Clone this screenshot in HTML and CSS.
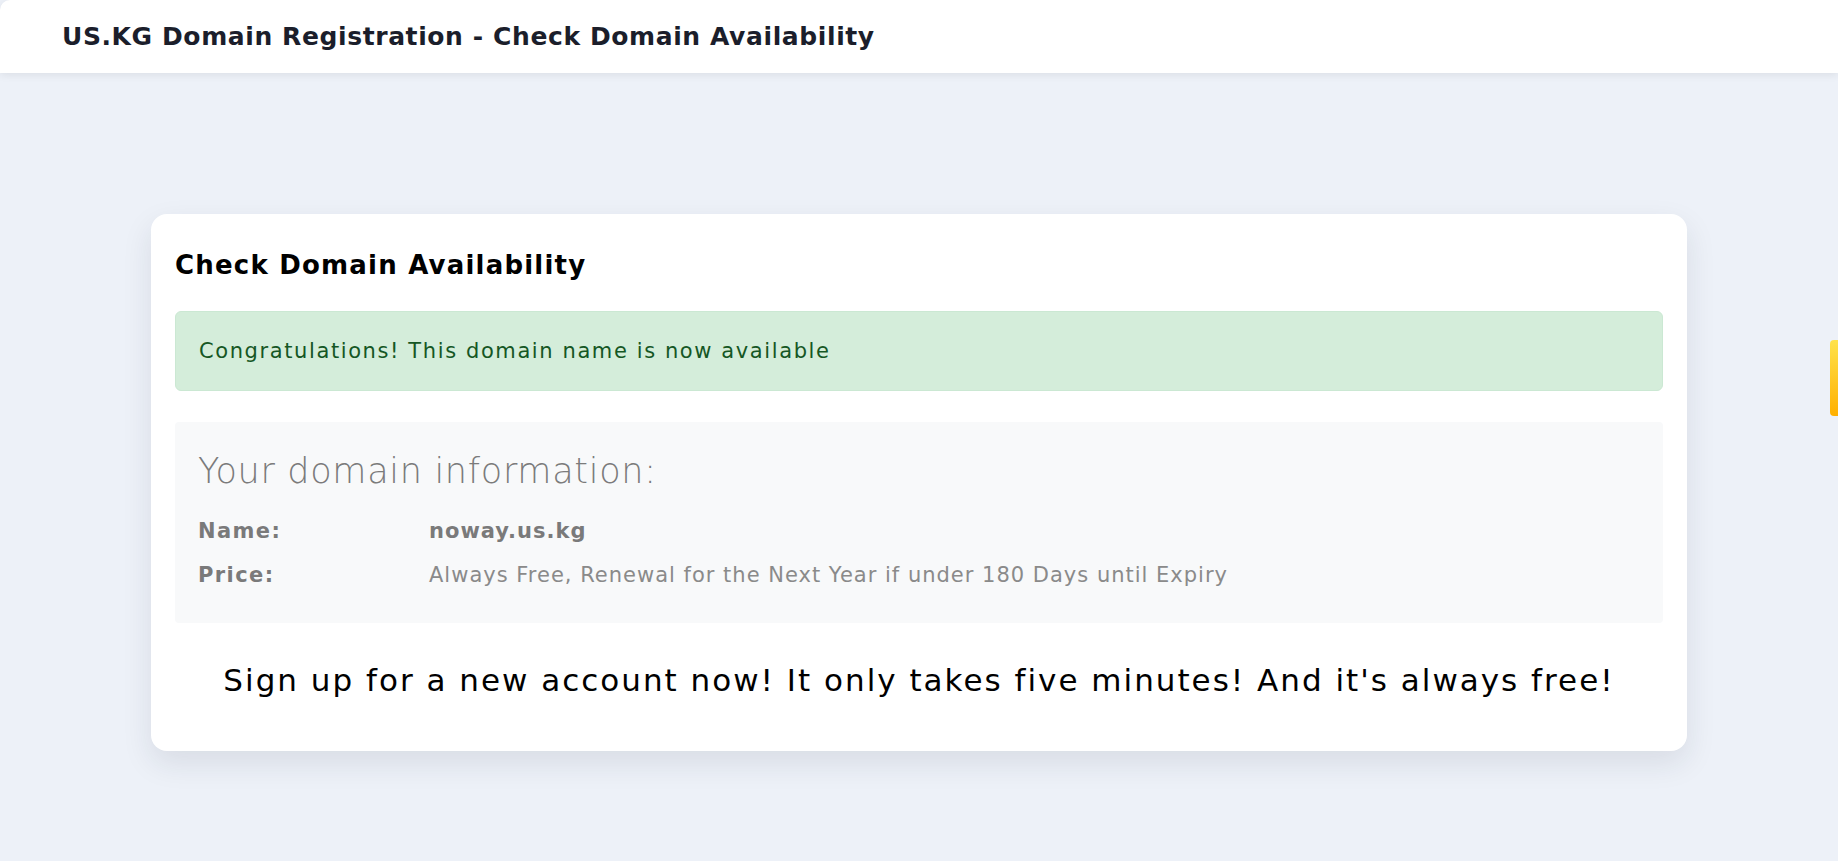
FILE: index.html
```html
<!DOCTYPE html>
<html lang="en">
<head>
<meta charset="utf-8">
<title>US.KG Domain Registration - Check Domain Availability</title>
<link rel="stylesheet" href="styles.css">
</head>
<body>
<header class="topbar">
  <h1 class="topbar-title">US.KG Domain Registration - Check Domain Availability</h1>
</header>
<main class="page">
  <section class="card">
    <h2 class="card-title">Check Domain Availability</h2>
    <div class="alert-success">Congratulations! This domain name is now available</div>
    <div class="info-box">
      <h3 class="info-heading">Your domain information:</h3>
      <div class="info-row">
        <span class="info-label">Name:</span>
        <span class="info-value info-value-strong">noway.us.kg</span>
      </div>
      <div class="info-row">
        <span class="info-label">Price:</span>
        <span class="info-value">Always Free, Renewal for the Next Year if under 180 Days until Expiry</span>
      </div>
    </div>
    <p class="signup">Sign up for a new account now! It only takes five minutes! And it's always free!</p>
  </section>
</main>
<div class="side-tab"></div>
</body>
</html>
```
FILE: styles.css
```css
html, body {
  margin: 0;
  padding: 0;
}
body {
  background: #edf1f8;
  font-family: "DejaVu Sans", "Open Sans", sans-serif;
  color: #212529;
  min-height: 861px;
  overflow: hidden;
}
.topbar {
  height: 73px;
  background: #ffffff;
  box-shadow: 0 2px 8px rgba(0, 0, 0, 0.08);
  border-top-left-radius: 10px;
  display: flex;
  align-items: center;
  padding-left: 62px;
  box-sizing: border-box;
}
.topbar-title {
  margin: 0;
  font-size: 25px;
  font-weight: 600;
  letter-spacing: 0.6px;
  color: #1b1e2b;
}
.page {
  padding-top: 141px;
  display: flex;
  justify-content: center;
}
.card {
  width: 1536px;
  box-sizing: border-box;
  background: #ffffff;
  border-radius: 16px;
  padding: 24px 24px 24px;
  box-shadow: 0 12px 30px rgba(30, 40, 60, 0.10);
}
.card-title {
  margin: 12px 0 30px;
  font-size: 26px;
  line-height: 31px;
  font-weight: 700;
  letter-spacing: 1.2px;
  color: #000000;
}
.alert-success {
  background: #d4edda;
  border: 1px solid #cbe8d3;
  border-radius: 6px;
  color: #155724;
  font-size: 21px;
  line-height: 30px;
  letter-spacing: 1.6px;
  padding: 24px 23px;
}
.info-box {
  margin-top: 31px;
  background: #f8f9fa;
  border-radius: 4px;
  padding: 30px 23px 26px;
}
.info-heading {
  margin: 0 0 19px;
  font-size: 35px;
  line-height: 38px;
  font-weight: 300;
  letter-spacing: 0.7px;
  color: #7b7b7b;
}
.info-row {
  display: flex;
  height: 44px;
  align-items: center;
  font-size: 21px;
  letter-spacing: 1px;
  color: #808080;
}
.info-label {
  width: 231px;
  flex: none;
  font-weight: 700;
  letter-spacing: 1.4px;
  color: #7a7a7a;
}
.info-value {
  color: #8a8a8a;
}
.info-value-strong {
  font-weight: 700;
  color: #7a7a7a;
}
.signup {
  margin: 33px 0 23px;
  text-align: center;
  font-size: 31px;
  line-height: 48px;
  letter-spacing: 2px;
  color: #000000;
}
.side-tab {
  position: fixed;
  right: 0;
  top: 340px;
  width: 8px;
  height: 76px;
  border-radius: 4px 0 0 4px;
  background: linear-gradient(180deg, #ffe24a 0%, #ffb000 100%);
}
```
